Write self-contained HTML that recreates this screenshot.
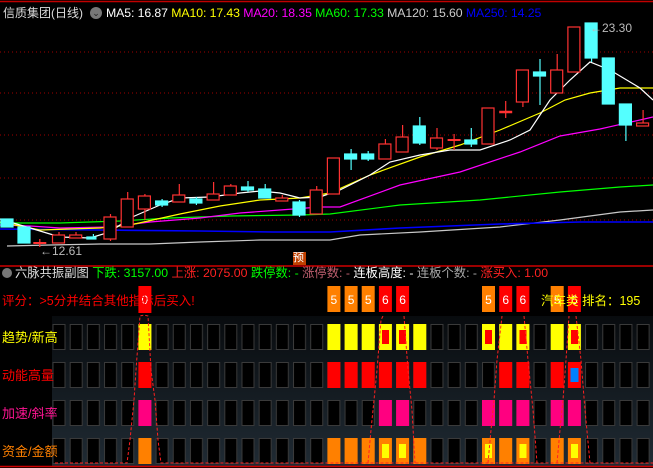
<!DOCTYPE html>
<html><head><meta charset="utf-8"><style>
html,body{margin:0;padding:0;background:#000;width:653px;height:468px;overflow:hidden}
body{position:relative;font-family:"Liberation Sans","Noto Sans CJK SC",sans-serif}
.t{position:absolute;white-space:nowrap;font-size:13px;line-height:15px}
svg{position:absolute;left:0;top:0}
</style></head><body>
<svg width="653" height="468" viewBox="0 0 653 468">
<defs>
<linearGradient id="bg" x1="0" y1="0" x2="0" y2="1"><stop offset="0" stop-color="#080b0e"/><stop offset="1" stop-color="#202b34"/></linearGradient>
<pattern id="cells" x="52.5" y="324" width="17.18" height="38" patternUnits="userSpaceOnUse">
<rect x="0.5" y="0.5" width="12" height="25" fill="#000" stroke="#3a3a3a"/>
</pattern>
</defs>
<line x1="0" y1="1.5" x2="653" y2="1.5" stroke="#c00000" stroke-width="1.5"/>
<g stroke="#a00000" stroke-dasharray="1,3">
<line x1="0" y1="52" x2="653" y2="52"/><line x1="0" y1="93" x2="653" y2="93"/>
<line x1="0" y1="135" x2="653" y2="135"/><line x1="0" y1="178" x2="653" y2="178"/>
<line x1="0" y1="220" x2="653" y2="220"/>
</g>
<g fill="none" stroke-width="1.2">
<polyline stroke="#c8c8c8" points="7,246 50,245 100,244 150,244 200,242 260,240 330,240 360,235 420,232 500,227 560,220 620,212 653,210"/>
<polyline stroke="#0000ff" stroke-width="1.6" points="0,229 100,230 200,231 273,232 330,232 400,228 500,224 580,222 653,222"/>
<polyline stroke="#00ff00" points="0,223 60,223 120,221 170,218 230,216 300,215 330,214 400,205 480,200 560,192 620,187 653,185"/>
<polyline stroke="#ff00ff" points="0,225 30,226 60,228 110,227 150,222 200,218 240,213 280,210 320,207 340,207 400,185 460,172 520,152 560,136 600,129 653,117"/>
<polyline stroke="#ffff00" points="0,222 40,230 100,228 130,225 180,214 220,206 260,200 300,198 330,193 370,175 420,157 460,145 500,130 540,113 565,100 590,93 620,88 653,88"/>
<polyline stroke="#ffffff" points="0,219 20,225 60,237 90,238 110,232 130,218 160,205 180,198 210,197 240,193 260,191 280,193 300,198 320,197 340,190 370,175 390,162 420,155 450,150 480,150 510,140 530,130 550,100 570,80 590,62 610,70 640,88 653,100"/>
</g>
<g stroke="#ff3232" fill="#000" stroke-width="1.2">
<line x1="39.8" y1="239" x2="39.8" y2="247"/><line x1="33.3" y1="243" x2="46.3" y2="243" stroke-width="2"/>
<line x1="59" y1="232" x2="59" y2="235"/><rect x="52.5" y="235" width="12" height="8"/>
<line x1="76" y1="232" x2="76" y2="235"/><rect x="69.7" y="235" width="12" height="3"/>
<line x1="110.5" y1="214" x2="110.5" y2="241"/><rect x="104" y="217" width="12" height="22"/>
<line x1="127.7" y1="192" x2="127.7" y2="199"/><rect x="121.2" y="199" width="12" height="28"/>
<line x1="144.9" y1="194" x2="144.9" y2="220"/><rect x="138.4" y="196" width="12" height="13"/>
<line x1="179.3" y1="184" x2="179.3" y2="195"/><rect x="172.8" y="195" width="12" height="7"/>
<line x1="213.6" y1="182" x2="213.6" y2="194"/><rect x="207.1" y="194" width="12" height="6"/>
<line x1="230.8" y1="184" x2="230.8" y2="186"/><rect x="224.3" y="186" width="12" height="9"/>
<line x1="282.3" y1="195" x2="282.3" y2="198"/><rect x="275.8" y="198" width="12" height="3"/>
<line x1="316.7" y1="186" x2="316.7" y2="190"/><rect x="310.2" y="190" width="12" height="24"/>
<rect x="327.4" y="158" width="12" height="36"/>
<line x1="385.4" y1="139" x2="385.4" y2="144"/><rect x="378.9" y="144" width="12" height="15"/>
<line x1="402.6" y1="125" x2="402.6" y2="137"/><rect x="396.1" y="137" width="12" height="15"/>
<line x1="437" y1="128" x2="437" y2="150"/><rect x="430.5" y="138" width="12" height="10"/>
<line x1="454.1" y1="134" x2="454.1" y2="150"/><line x1="447.6" y1="140" x2="460.6" y2="140" stroke-width="2"/>
<rect x="482" y="108" width="12" height="36"/>
<line x1="505.7" y1="101" x2="505.7" y2="118"/><line x1="499.2" y1="112" x2="512.2" y2="112" stroke-width="2.5"/>
<line x1="522.9" y1="102" x2="522.9" y2="107"/><rect x="516.4" y="70" width="12" height="32"/>
<line x1="557.2" y1="54" x2="557.2" y2="70"/><rect x="550.7" y="70" width="12" height="23"/>
<rect x="567.9" y="27" width="12" height="45"/>
<line x1="643.1" y1="110" x2="643.1" y2="123"/><rect x="636.6" y="123" width="12" height="3"/>
</g>
<g stroke="#54ffff" fill="#54ffff" stroke-width="1.2">
<rect x="1" y="219" width="12" height="8"/>
<rect x="18" y="227" width="12" height="16"/>
<line x1="93.4" y1="234" x2="93.4" y2="239"/><rect x="86.9" y="237" width="9" height="2"/>
<line x1="162.1" y1="199" x2="162.1" y2="207"/><rect x="155.6" y="201" width="12" height="4"/>
<line x1="196.4" y1="197" x2="196.4" y2="205"/><rect x="189.9" y="199" width="12" height="4"/>
<line x1="248" y1="181" x2="248" y2="192"/><rect x="241.5" y="187" width="12" height="3"/>
<line x1="265.2" y1="184" x2="265.2" y2="198"/><rect x="258.7" y="189" width="12" height="9"/>
<line x1="299.5" y1="200" x2="299.5" y2="217"/><rect x="293" y="202" width="12" height="13"/>
<line x1="351.1" y1="149" x2="351.1" y2="170"/><rect x="344.6" y="154" width="12" height="5"/>
<line x1="368.2" y1="151" x2="368.2" y2="161"/><rect x="361.7" y="154" width="12" height="5"/>
<line x1="419.8" y1="117" x2="419.8" y2="145"/><rect x="413.3" y="126" width="12" height="17"/>
<line x1="471.3" y1="128" x2="471.3" y2="147"/><rect x="464.8" y="140" width="12" height="4"/>
<line x1="540" y1="59" x2="540" y2="105"/><rect x="533.5" y="72" width="12" height="4"/>
<line x1="591.6" y1="58" x2="591.6" y2="62"/><rect x="585.1" y="23" width="12" height="35"/>
<rect x="602.3" y="58" width="12" height="46"/>
<line x1="625.9" y1="125" x2="625.9" y2="141"/><rect x="619.4" y="104" width="12" height="21"/>
</g>
<rect x="293" y="252" width="13" height="13" fill="#c04000"/>
<line x1="0" y1="266" x2="653" y2="266" stroke="#d00000" stroke-width="1.5"/>
<rect x="52" y="316" width="601" height="150" fill="url(#bg)"/>
<rect x="52" y="324" width="601" height="142" fill="url(#cells)"/>
<line x1="0" y1="466.5" x2="653" y2="466.5" stroke="#d00000" stroke-width="1.5"/>
<g>
<g fill="#ffff00">
<rect x="138.4" y="324" width="13" height="26"/><rect x="327.4" y="324" width="13" height="26"/><rect x="344.6" y="324" width="13" height="26"/><rect x="361.7" y="324" width="13" height="26"/><rect x="378.9" y="324" width="13" height="26"/><rect x="396.1" y="324" width="13" height="26"/><rect x="413.3" y="324" width="13" height="26"/><rect x="482" y="324" width="13" height="26"/><rect x="499.2" y="324" width="13" height="26"/><rect x="516.4" y="324" width="13" height="26"/><rect x="550.7" y="324" width="13" height="26"/><rect x="567.9" y="324" width="13" height="26"/>
</g>
<g fill="#ff0000">
<rect x="382" y="330" width="7" height="14"/><rect x="399" y="330" width="7" height="14"/><rect x="485" y="330" width="7" height="14"/><rect x="519.5" y="330" width="7" height="14"/><rect x="571" y="330" width="7" height="14"/>
<rect x="138.4" y="362" width="13" height="26"/><rect x="327.4" y="362" width="13" height="26"/><rect x="344.6" y="362" width="13" height="26"/><rect x="361.7" y="362" width="13" height="26"/><rect x="378.9" y="362" width="13" height="26"/><rect x="396.1" y="362" width="13" height="26"/><rect x="413.3" y="362" width="13" height="26"/><rect x="499.2" y="362" width="13" height="26"/><rect x="516.4" y="362" width="13" height="26"/><rect x="550.7" y="362" width="13" height="26"/><rect x="567.9" y="362" width="13" height="26"/>
</g>
<rect x="570.5" y="368" width="8" height="14" fill="#0080ff"/>
<g fill="#ff0080">
<rect x="138.4" y="400" width="13" height="26"/><rect x="378.9" y="400" width="13" height="26"/><rect x="396.1" y="400" width="13" height="26"/><rect x="482" y="400" width="13" height="26"/><rect x="499.2" y="400" width="13" height="26"/><rect x="516.4" y="400" width="13" height="26"/><rect x="550.7" y="400" width="13" height="26"/><rect x="567.9" y="400" width="13" height="26"/>
</g>
<g fill="#ff8000">
<rect x="138.4" y="438" width="13" height="26"/><rect x="327.4" y="438" width="13" height="26"/><rect x="344.6" y="438" width="13" height="26"/><rect x="361.7" y="438" width="13" height="26"/><rect x="378.9" y="438" width="13" height="26"/><rect x="396.1" y="438" width="13" height="26"/><rect x="413.3" y="438" width="13" height="26"/><rect x="482" y="438" width="13" height="26"/><rect x="499.2" y="438" width="13" height="26"/><rect x="516.4" y="438" width="13" height="26"/><rect x="550.7" y="438" width="13" height="26"/><rect x="567.9" y="438" width="13" height="26"/>
</g>
<g fill="#ffff00">
<rect x="382" y="444" width="7" height="14"/><rect x="399" y="444" width="7" height="14"/><rect x="485" y="444" width="7" height="14"/><rect x="519.5" y="444" width="7" height="14"/><rect x="571" y="444" width="7" height="14"/>
</g>
</g>
<g>
<rect x="138.4" y="286" width="13" height="27" fill="#ff0000"/>
<rect x="327.4" y="286" width="13" height="26" fill="#ff8000"/><rect x="344.6" y="286" width="13" height="26" fill="#ff8000"/><rect x="361.7" y="286" width="13" height="26" fill="#ff8000"/>
<rect x="378.9" y="286" width="13" height="26" fill="#ff0000"/><rect x="396.1" y="286" width="13" height="26" fill="#ff0000"/>
<rect x="482" y="286" width="13" height="26" fill="#ff8000"/><rect x="499.2" y="286" width="13" height="26" fill="#ff0000"/><rect x="516.4" y="286" width="13" height="26" fill="#ff0000"/>
<rect x="550.7" y="286" width="13" height="26" fill="#ff8000"/><rect x="567.9" y="286" width="13" height="26" fill="#ff0000"/>
</g>
<g font-family="Liberation Sans" font-size="12" fill="#fff" text-anchor="middle">
<text x="144.9" y="304">0</text><text x="333.9" y="304">5</text><text x="351.1" y="304">5</text><text x="368.2" y="304">5</text><text x="385.4" y="304">6</text><text x="402.6" y="304">6</text><text x="488.5" y="304">5</text><text x="505.7" y="304">6</text><text x="522.9" y="304">6</text><text x="557.2" y="304">5</text><text x="574.4" y="304">6</text>
</g>
<g fill="none" stroke="#ff2020" stroke-dasharray="3,2" stroke-width="1">
<polyline points="55,463 127,463 130,440 134,400 136,370 140,316 144,315 148,316 151,370 155,400 158,440 161,463 653,463"/>
<polyline points="368,463 371,430 374,400 377,370 381,320 383,316"/>
<polyline points="404,316 408,370 412,410 415,463"/>
<polyline points="488,463 491,430 494,400 497,360 502,316"/>
<polyline points="524,316 528,360 533,410 537,463"/>
<polyline points="557,463 560,430 563,400 566,360 569,316"/>
<polyline points="576,316 581,360 585,410 590,463"/>
</g>
</svg>
<div class="t" style="left:3px;top:6px;color:#ddd;font-size:12px">信质集团(日线)</div>
<div style="position:absolute;left:90px;top:7px;width:12px;height:12px;border-radius:50%;background:#777;color:#222;font-size:9px;line-height:12px;text-align:center">⌄</div>
<div class="t" style="left:106px;top:6px;font-size:12.3px;letter-spacing:-0.1px"><span style="color:#fff">MA5: 16.87</span> <span style="color:#ff0">MA10: 17.43</span> <span style="color:#f0f">MA20: 18.35</span> <span style="color:#0f0">MA60: 17.33</span> <span style="color:#ccc">MA120: 15.60</span> <span style="color:#00f">MA250: 14.25</span></div>
<div class="t" style="left:590px;top:21px;color:#bbb;font-size:12px">←23.30</div>
<div class="t" style="left:40px;top:244px;color:#bbb;font-size:12px">←12.61</div>
<div class="t" style="left:293px;top:251px;color:#fff;font-size:11px">预</div>
<div style="position:absolute;left:2px;top:268px;width:10px;height:10px;border-radius:50%;background:#777"></div>
<div class="t" style="left:15px;top:266px;font-size:12.3px"><span style="color:#ddd">六脉共振副图</span> <span style="color:#0f0">下跌: 3157.00</span> <span style="color:#f22">上涨: 2075.00</span> <span style="color:#0f0">跌停数: -</span> <span style="color:#c06070">涨停数: -</span> <span style="color:#fff">连板高度: -</span> <span style="color:#aaa">连板个数: -</span> <span style="color:#f22">涨买入: 1.00</span></div>
<div class="t" style="left:2px;top:294px;color:#f00;font-size:12.5px">评分：&gt;5分并结合其他指标后买入!</div>
<div class="t" style="left:541px;top:294px;color:#ff0;font-size:12.5px">汽车类 排名：195</div>
<div class="t" style="left:2px;top:330px;color:#ff0">趋势/新高</div>
<div class="t" style="left:2px;top:368px;color:#f00">动能高量</div>
<div class="t" style="left:2px;top:406px;color:#ff1493">加速/斜率</div>
<div class="t" style="left:2px;top:444px;color:#ff8000">资金/金额</div>
</body></html>
